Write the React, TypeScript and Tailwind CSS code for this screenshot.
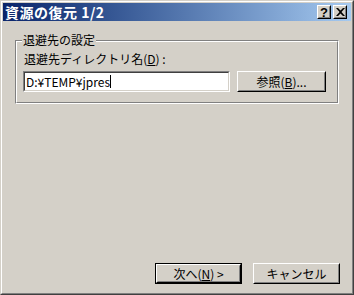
import React from "react";

const font = { fontFamily: '"Noto Sans CJK JP", "Liberation Sans", sans-serif' };

function Raised({ className = "", children }: { className?: string; children: React.ReactNode }) {
  // classic 3d button: white/black outer, face/gray inner
  return (
    <div className={`border border-t-white border-l-white border-r-black border-b-black ${className}`}>
      <div className="w-full h-full border border-t-[#D4D0C8] border-l-[#D4D0C8] border-r-[#808080] border-b-[#808080] flex items-center justify-center">
        {children}
      </div>
    </div>
  );
}

function CaptionButton({ children }: { children: React.ReactNode }) {
  return <Raised className="w-[14px] h-[14px] bg-[#D4D0C8]">{children}</Raised>;
}

export default function App() {
  return (
    <div style={font} className="w-[354px] h-[295px] bg-[#D4D0C8] text-black text-[12px] leading-none select-none">
      <div className="w-full h-full border border-t-[#D4D0C8] border-l-[#D4D0C8] border-r-[#404040] border-b-[#404040]">
        <div className="w-full h-full border border-t-white border-l-white border-r-[#808080] border-b-[#808080] p-px flex flex-col">
          {/* title bar */}
          <div className="h-[18px] bg-linear-to-r from-[#0A246A] to-[#A6CAF0] flex items-center pl-[2px] pr-[4px]">
            <span className="text-white font-bold text-[14px] tracking-[0.5px] flex-1">資源の復元 1/2</span>
            <div className="flex gap-[2px]">
              <CaptionButton>
                <span className="font-bold text-[13px] leading-none" style={{ fontFamily: '"Liberation Sans", sans-serif' }}>?</span>
              </CaptionButton>
              <CaptionButton>
                <svg width="9" height="8" viewBox="0 0 9 8">
                  <path d="M0 0h2l2.5 2.5L7 0h2L5.5 4 9 8H7L4.5 5.5 2 8H0l3.5-4z" fill="black" />
                </svg>
              </CaptionButton>
            </div>
          </div>

          {/* group box */}
          <div className="relative mt-[19px] mx-3 h-[64px] border border-t-[#808080] border-l-[#808080] border-r-white border-b-white">
            <div className="w-full h-full border border-t-white border-l-white border-r-[#808080] border-b-[#808080] pt-[11px] px-[6px]">
              <div className="pl-px">
                退避先ディレクトリ名(<span className="underline">D</span>) :
              </div>
              <div className="flex items-center mt-[6px] gap-[7px]">
                <div className="w-[207px] h-[21px] border border-t-[#808080] border-l-[#808080] border-r-white border-b-white">
                  <div className="w-full h-full bg-white border border-t-[#404040] border-l-[#404040] border-r-[#D4D0C8] border-b-[#D4D0C8] flex items-center pl-[1px]">
                    <span>D:¥TEMP¥jpres</span>
                    <span className="w-px h-[13px] bg-black" />
                  </div>
                </div>
                <Raised className="w-[89px] h-[21px]">
                  <span>参照(<span className="underline">B</span>)...</span>
                </Raised>
              </div>
            </div>
            <span className="absolute -top-[7px] left-[6px] px-px bg-[#D4D0C8]">退避先の設定</span>
          </div>

          <div className="flex-1" />

          {/* buttons */}
          <div className="flex justify-end gap-[11px] pr-[11px] pb-[8px]">
            <div className="w-[87px] h-[21px] border border-black">
              <Raised className="w-full h-full">
                <span>次へ(<span className="underline">N</span>) &gt;</span>
              </Raised>
            </div>
            <Raised className="w-[87px] h-[21px]">
              <span>キャンセル</span>
            </Raised>
          </div>
        </div>
      </div>
    </div>
  );
}
